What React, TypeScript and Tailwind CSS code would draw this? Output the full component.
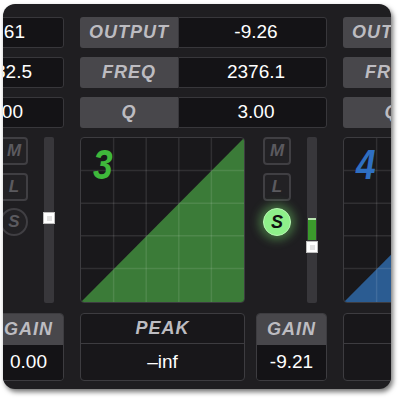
import React from 'react';

type Row = { label: string; value: string; valueCls: string };

type StripProps = {
  num: string;
  numCls: string;
  fill: string;
  rows: Row[];
  gain: string;
  soloOn?: boolean;
  thumbTop: number;
  meter?: { top: number; height: number };
};

const labelText = 'font-bold italic tracking-[1px] text-[18px] text-[#bdbcc1]';

function ParamRow({ label, value, valueCls }: Row) {
  return (
    <div className="flex h-[31px]">
      <div className={`w-[98px] rounded-l-[3px] bg-[#48474b] flex items-center justify-center ${labelText}`}>
        {label}
      </div>
      <div className={`w-[149px] rounded-r-[3px] border border-[#38373b] bg-[#141316] flex items-center text-[19px] text-white ${valueCls}`}>
        {value}
      </div>
    </div>
  );
}

function ModeButton({ letter, round, on }: { letter: string; round?: boolean; on?: boolean }) {
  if (on) {
    return (
      <div className="w-[28px] h-[28px] rounded-full bg-[#8ef08a] border border-[#b9f7b4] shadow-[0_0_10px_4px_rgba(120,230,110,0.4)] flex items-center justify-center text-[18px] font-bold italic text-[#101010]">
        {letter}
      </div>
    );
  }
  return (
    <div
      className={`w-[28px] h-[28px] border-2 border-[#403f43] bg-[#222124] flex items-center justify-center text-[17px] font-bold italic text-[#5b5a5f] ${
        round ? 'rounded-full' : 'rounded-[4px]'
      }`}
    >
      {letter}
    </div>
  );
}

function Graph({ num, numCls, fill }: { num: string; numCls: string; fill: string }) {
  const lines = [33, 66, 99, 132];
  return (
    <div className="relative w-[165px] h-full rounded-[4px] border border-[#3d3c40] bg-[#19181b] overflow-hidden">
      <svg className="absolute inset-0 w-full h-full" viewBox="0 0 165 166" preserveAspectRatio="none">
        <polygon points="0,166 165,0 165,166" fill={fill} />
        {lines.map((p) => (
          <line key={'v' + p} x1={p} y1={0} x2={p} y2={166} stroke="rgba(255,255,255,0.1)" strokeWidth={1.5} />
        ))}
        {lines.map((p) => (
          <line key={'h' + p} x1={0} y1={p} x2={165} y2={p} stroke="rgba(255,255,255,0.1)" strokeWidth={1.5} />
        ))}
      </svg>
      {/* big channel number, a bit condensed like the original face */}
      <span
        className={`absolute left-[12px] top-[5px] inline-block origin-left scale-x-[0.82] text-[43px] leading-none font-bold italic ${numCls}`}
      >
        {num}
      </span>
    </div>
  );
}

function Slider({ thumbTop, meter }: { thumbTop: number; meter?: { top: number; height: number } }) {
  return (
    <div className="relative w-[10px] h-full rounded-[2px] bg-[#38373b]">
      {meter && (
        <div
          className="absolute left-[1px] right-[1px] bg-[#3b9a2c] border-t-2 border-[#b6e3ae]"
          style={{ top: meter.top, height: meter.height }}
        />
      )}
      <div
        className="absolute left-[-1px] w-[12px] h-[12px] bg-white border border-[#bdbdbd] flex items-center justify-center"
        style={{ top: thumbTop }}
      >
        <div className="w-[5px] h-[5px] bg-[#e2e2e2]" />
      </div>
    </div>
  );
}

function Strip({ num, numCls, fill, rows, gain, soloOn, thumbTop, meter }: StripProps) {
  return (
    <div className="w-[263px] shrink-0 flex flex-col">
      <div className="flex flex-col gap-[9px]">
        {rows.map((r) => (
          <ParamRow key={r.label} {...r} />
        ))}
      </div>

      <div className="flex h-[166px] mt-[9px]">
        <Graph num={num} numCls={numCls} fill={fill} />
        <div className="ml-[18px] w-[28px] flex flex-col gap-[8px]">
          <ModeButton letter="M" />
          <ModeButton letter="L" />
          <div className="-mt-[1px]">
            <ModeButton letter="S" round on={soloOn} />
          </div>
        </div>
        <div className="ml-[16px] h-full">
          <Slider thumbTop={thumbTop} meter={meter} />
        </div>
      </div>

      <div className="flex mt-[10px]">
        <div className="w-[165px] h-[68px] rounded-[4px] border border-[#3d3c40] bg-[#18171a] flex flex-col">
          <div className={`h-[30px] border-b border-[#3d3c40] flex items-center justify-center ${labelText}`}>PEAK</div>
          <div className="flex-1 flex items-center justify-center text-[19px] text-white">–inf</div>
        </div>
        <div className="ml-[11px] w-[71px] h-[68px] rounded-[4px] border border-[#3d3c40] overflow-hidden flex flex-col">
          <div className={`h-[31px] bg-[#48474b] flex items-center justify-center ${labelText}`}>GAIN</div>
          <div className="flex-1 bg-[#141316] flex items-center justify-center text-[19px] text-white">{gain}</div>
        </div>
      </div>
    </div>
  );
}

export default function App() {
  const center = 'justify-center pl-[7px]';
  return (
    <div className="w-[400px] h-[400px] bg-white pt-[4px] pl-[3px] font-[Liberation_Sans,Arial,sans-serif]">
      <div className="w-[388px] h-[385px] rounded-[12px] bg-[#1f1e21] overflow-hidden shadow-[2px_3px_5px_rgba(0,0,0,0.55)] pt-[13px]">
        <div className="flex ml-[-186px]">
          <Strip
            num="2"
            numCls="text-[#c9a23a]"
            fill="#6b5a2a"
            rows={[
              { label: 'OUTPUT', value: '-12.61', valueCls: 'justify-end pr-[38px]' },
              { label: 'FREQ', value: '1382.5', valueCls: 'justify-end pr-[31px]' },
              { label: 'Q', value: '1.00', valueCls: 'justify-end pr-[40px]' },
            ]}
            gain="0.00"
            thumbTop={75}
          />
          <Strip
            num="3"
            numCls="text-[#3fb83b]"
            fill="#3b7b38"
            rows={[
              { label: 'OUTPUT', value: '-9.26', valueCls: center },
              { label: 'FREQ', value: '2376.1', valueCls: center },
              { label: 'Q', value: '3.00', valueCls: center },
            ]}
            gain="-9.21"
            soloOn
            thumbTop={104}
            meter={{ top: 81, height: 22 }}
          />
          <Strip
            num="4"
            numCls="text-[#2f6fc2]"
            fill="#2b5c92"
            rows={[
              { label: 'OUTPUT', value: '-6.40', valueCls: center },
              { label: 'FREQ', value: '5120.0', valueCls: center },
              { label: 'Q', value: '2.00', valueCls: center },
            ]}
            gain="0.00"
            thumbTop={90}
          />
        </div>
      </div>
    </div>
  );
}
